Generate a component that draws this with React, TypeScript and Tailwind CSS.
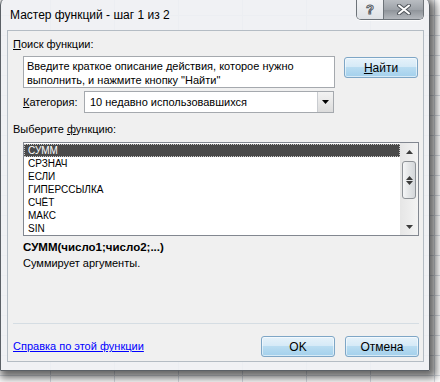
import React from 'react';

const font = "font-['Liberation_Sans',Arial,sans-serif]";

const functions = ['СУММ', 'СРЗНАЧ', 'ЕСЛИ', 'ГИПЕРССЫЛКА', 'СЧЁТ', 'МАКС', 'SIN'];

const AeroButton = ({ children, className = '' }: { children: React.ReactNode; className?: string }) => (
  <button
    className={`h-[21px] w-[74px] rounded-[3px] border border-[#7ea6c6] bg-[linear-gradient(to_bottom,#e6f2fa_0%,#d6eaf7_45%,#b9dcf1_50%,#a3d0ec_100%)] text-[12px] leading-none text-black shadow-[inset_0_0_0_1px_rgba(255,255,255,0.55)] ${className}`}
  >
    {children}
  </button>
);

const CaptionButtons = () => (
  <div className="mr-[6px] mt-[3px] flex h-[20px] overflow-hidden rounded-b-[5px] border border-t-0 border-[#6d7379] shadow-[0_1px_0_rgba(255,255,255,0.8)]">
    <div className="flex w-[27px] items-center justify-center border-r border-[#6d7379] bg-[linear-gradient(to_bottom,#f2f3f5,#dfe2e6)]">
      <span className="text-[13px] font-bold leading-none text-white [-webkit-text-stroke:1px_#5a5f66]">?</span>
    </div>
    <div className="flex w-[39px] items-center justify-center bg-[linear-gradient(to_bottom,#b9bdc2_0%,#9ea3a9_50%,#8d9298_51%,#b4b8bd_100%)]">
      <svg width="16" height="11" viewBox="0 0 16 11">
        <path d="M3 1.5 L13 9.5 M13 1.5 L3 9.5" stroke="#53585e" strokeWidth="4" strokeLinecap="round" />
        <path d="M3 1.5 L13 9.5 M13 1.5 L3 9.5" stroke="#ffffff" strokeWidth="2" strokeLinecap="round" />
      </svg>
    </div>
  </div>
);

const ScrollBar = () => (
  <div className="flex h-full w-[18px] flex-col items-center bg-[linear-gradient(to_right,#e6e6e6,#f3f3f3)]">
    <div className="flex h-[17px] w-full items-center justify-center">
      <svg width="7" height="4" viewBox="0 0 7 4"><path d="M0 4 L3.5 0 L7 4 Z" fill="#3c3c3c" /></svg>
    </div>
    <div className="mt-[1px] flex h-[38px] w-[14px] items-center justify-center rounded-[3px] border border-[#8e9297] bg-[linear-gradient(to_right,#f5f6f7,#e3e5e7_50%,#d4d7da)]">
      <svg width="7" height="9" viewBox="0 0 7 9">
        <path d="M0 4 L3.5 0 L7 4 Z" fill="#3a3a3a" />
        <path d="M0 5 L3.5 9 L7 5 Z" fill="#3a3a3a" />
      </svg>
    </div>
    <div className="flex-1" />
    <div className="flex h-[17px] w-full items-center justify-center">
      <svg width="7" height="4" viewBox="0 0 7 4"><path d="M0 0 L3.5 4 L7 0 Z" fill="#3c3c3c" /></svg>
    </div>
  </div>
);

export default function App() {
  return (
    <div
      className={`h-[382px] w-[440px] overflow-hidden bg-white bg-[linear-gradient(to_right,#d8dde4_1px,transparent_1px),linear-gradient(to_bottom,#d8dde4_1px,transparent_1px)] bg-[size:64px_20px] bg-[position:50px_15px] ${font} text-[11px] text-black`}
    >
      <div className="-mt-[4px] flex h-[375px] w-[430px] flex-col rounded-t-[9px] border border-[#5b6066] bg-[rgba(238,240,243,0.9)] px-[6px] pb-[8px] pr-[5px] shadow-[3px_4px_8px_3px_rgba(0,0,0,0.6)]">
        {/* Title bar */}
        <div className="-mx-[6px] flex h-[33px] shrink-0 items-start justify-between">
          <div className="pl-[9px] pt-[10px] text-[12px] leading-[16px]">Мастер функций - шаг 1 из 2</div>
          <CaptionButtons />
        </div>

        {/* Client area */}
        <div className="flex flex-1 flex-col border border-[#b4bcc4] bg-[#f0f0f0] px-[5px] pb-[4px]">
          <div className="mt-[6px] h-[14px] leading-[14px]">
            <u>П</u>оиск функции:
          </div>

          <div className="mt-[5px] ml-[10px] flex items-start">
            <div className="h-[32px] w-[312px] border border-[#a5a9ae] bg-white px-[3px] pt-[2px] leading-[14px]">
              Введите краткое описание действия, которое нужно выполнить, и нажмите кнопку "Найти"
            </div>
            <AeroButton className="ml-[9px] mt-[1px] h-[20px]">
              <u>Н</u>айти
            </AeroButton>
          </div>

          <div className="mt-[3px] ml-[10px] flex h-[22px] items-center">
            <div className="w-[61px] leading-[14px]">
              <u>К</u>атегория:
            </div>
            <div className="flex h-[22px] w-[250px] items-stretch border border-[#a5a9ae] bg-white">
              <div className="flex flex-1 items-center pl-[5px] leading-[14px]">10 недавно использовавшихся</div>
              <div className="flex w-[16px] items-center justify-center border-l border-[#c9ccd0] bg-[linear-gradient(to_bottom,#f3f3f3,#dcdcdc)]">
                <svg width="7" height="4" viewBox="0 0 7 4"><path d="M0 0 L3.5 4 L7 0 Z" fill="#000" /></svg>
              </div>
            </div>
          </div>

          <div className="mt-[9px] h-[14px] leading-[14px]">
            Выберите <u>ф</u>ункцию:
          </div>

          <div className="mt-[6px] ml-[10px] flex h-[94px] w-[396px] border border-[#828790] bg-white">
            <div className="flex flex-1 flex-col pt-[1px] text-[10px]">
              {functions.map((f, i) => (
                <div
                  key={f}
                  className={
                    i === 0
                      ? 'h-[13px] border border-dotted border-[#c8c8c8] bg-[#4a4a4a] pl-[3px] leading-[11px] text-white'
                      : 'h-[13px] pl-[4px] leading-[13px]'
                  }
                >
                  {f}
                </div>
              ))}
            </div>
            <ScrollBar />
          </div>

          <div className="mt-[4px] ml-[10px] h-[14px] text-[11.5px] font-bold leading-[14px]">СУММ(число1;число2;...)</div>
          <div className="mt-[2px] ml-[10px] h-[14px] leading-[14px]">Суммирует аргументы.</div>

          <div className="mt-[53px] h-px w-[406px] bg-[#d5dde3]" />

          <div className="mt-[12px] flex h-[21px] w-[406px] items-center">
            <a className="flex-1 cursor-pointer text-[#0000ff] underline">Справка по этой функции</a>
            <AeroButton>OK</AeroButton>
            <AeroButton className="ml-[10px]">Отмена</AeroButton>
          </div>
        </div>
      </div>
    </div>
  );
}
